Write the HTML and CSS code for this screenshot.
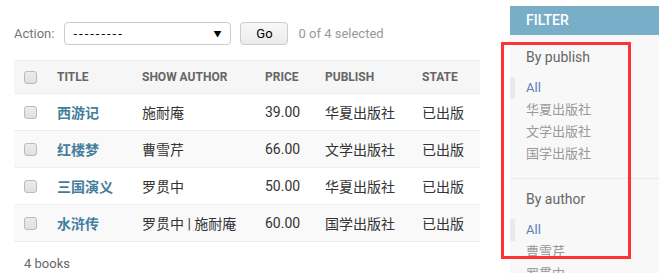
FILE: index.html
```html
<!DOCTYPE html>
<html lang="zh-CN">
<head>
  <meta charset="UTF-8">
  <title>Select book to change</title>
  <link rel="stylesheet" href="styles.css">
</head>
<body>

  <div class="changelist">
    <div class="actions">
      <label>Action:</label>
      <div class="select">
        <span>---------</span>
        <span class="arrow">&#9660;</span>
      </div>
      <button class="go">Go</button>
      <span class="counter">0 of 4 selected</span>
    </div>

    <table class="result-list">
      <colgroup>
        <col class="c-check">
        <col class="c-title">
        <col class="c-author">
        <col class="c-price">
        <col class="c-publish">
        <col class="c-state">
      </colgroup>
      <thead>
        <tr>
          <th><input type="checkbox"></th>
          <th>Title</th>
          <th>Show author</th>
          <th>Price</th>
          <th>Publish</th>
          <th>State</th>
        </tr>
      </thead>
      <tbody>
        <tr class="row1">
          <td><input type="checkbox"></td>
          <th><a href="#">西游记</a></th>
          <td>施耐庵</td>
          <td>39.00</td>
          <td>华夏出版社</td>
          <td>已出版</td>
        </tr>
        <tr class="row2">
          <td><input type="checkbox"></td>
          <th><a href="#">红楼梦</a></th>
          <td>曹雪芹</td>
          <td>66.00</td>
          <td>文学出版社</td>
          <td>已出版</td>
        </tr>
        <tr class="row1">
          <td><input type="checkbox"></td>
          <th><a href="#">三国演义</a></th>
          <td>罗贯中</td>
          <td>50.00</td>
          <td>华夏出版社</td>
          <td>已出版</td>
        </tr>
        <tr class="row2">
          <td><input type="checkbox"></td>
          <th><a href="#">水浒传</a></th>
          <td>罗贯中 | 施耐庵</td>
          <td>60.00</td>
          <td>国学出版社</td>
          <td>已出版</td>
        </tr>
      </tbody>
    </table>

    <p class="paginator">4 books</p>
  </div>

  <div class="filter">
    <h2>Filter</h2>
    <div class="filter-group">
      <h3>By publish</h3>
      <ul>
        <li class="selected"><a href="#">All</a></li>
        <li><a href="#">华夏出版社</a></li>
        <li><a href="#">文学出版社</a></li>
        <li><a href="#">国学出版社</a></li>
      </ul>
    </div>
    <div class="filter-group">
      <h3>By author</h3>
      <ul>
        <li class="selected"><a href="#">All</a></li>
        <li><a href="#">曹雪芹</a></li>
        <li><a href="#">罗贯中</a></li>
      </ul>
    </div>
  </div>

  <!-- annotation box -->
  <div class="highlight"></div>

</body>
</html>
```

FILE: styles.css
```css
html, body {
  overflow: hidden;
}

body {
  font-family: Roboto, "Noto Sans CJK SC", sans-serif;
  color: #333;
  margin: 0;
  padding: 0;
  display: flex;
  align-items: flex-start;
  position: relative;
  height: 273px;
}

a {
  color: #447e9b;
  text-decoration: none;
}

.changelist {
  width: 466px;
  margin-left: 14px;
  flex-shrink: 0;
}

.actions {
  display: flex;
  align-items: center;
  height: 24px;
  margin-top: 21px;
  font-size: 13px;
}

.actions label {
  color: #777;
  margin-right: 10px;
}

.select {
  width: 167px;
  height: 23px;
  border: 1px solid #ccc;
  border-radius: 4px;
  background: white;
  display: flex;
  align-items: center;
  justify-content: space-between;
  padding: 0 9px 0 8px;
  box-sizing: border-box;
  color: #000;
  font-size: 13px;
  letter-spacing: 2px;
}

.select .arrow {
  font-size: 8px;
  letter-spacing: 0;
}

.go {
  margin-left: 9px;
  width: 48px;
  height: 23px;
  border: 1px solid #ccc;
  border-radius: 4px;
  background: linear-gradient(#f7f7f7, #ececec);
  font-family: Roboto, sans-serif;
  font-size: 13px;
  color: #000;
  padding: 0;
}

.counter {
  margin-left: 10px;
  color: #999;
}

.result-list {
  width: 466px;
  margin-top: 15px;
  border-collapse: collapse;
  table-layout: fixed;
}

.c-check { width: 33px; }
.c-title { width: 85px; }
.c-author { width: 123px; }
.c-price { width: 60px; }
.c-publish { width: 97px; }
.c-state { width: 68px; }

.result-list th,
.result-list td {
  padding: 0 0 0 10px;
  text-align: left;
  vertical-align: middle;
  white-space: nowrap;
}

.result-list thead th {
  height: 32px;
  background-color: #f6f6f6;
  border-top: 1px solid #eee;
  border-bottom: 1px solid #eee;
  color: #666;
  font-size: 12px;
  font-weight: 700;
  text-transform: uppercase;
}

.result-list tbody td,
.result-list tbody th {
  height: 36px;
  border-bottom: 1px solid #eee;
  font-size: 14px;
  font-weight: 400;
}

.result-list tbody th a {
  font-weight: 700;
}

.row2 {
  background-color: #f9f9f9;
}

input[type="checkbox"] {
  appearance: none;
  margin: 0;
  width: 13px;
  height: 13px;
  display: block;
  border: 1px solid #bbb;
  border-radius: 3px;
  background: linear-gradient(#ececec, #e0e0e0);
}

.paginator {
  margin: 14px 0 0 10px;
  font-size: 13px;
  color: #666;
}

.filter {
  width: 240px;
  flex-shrink: 0;
  margin-left: 30px;
  margin-top: 6px;
  background-color: #f8f8f8;
  height: 300px;
}

.filter h2 {
  margin: 0;
  height: 29px;
  line-height: 29px;
  padding: 0 16px;
  background-color: #79aec8;
  color: white;
  font-size: 14px;
  font-weight: 500;
  text-transform: uppercase;
}

.filter-group {
  border-bottom: 1px solid #eaeaea;
}

.filter h3 {
  margin: 12px 16px 10px;
  line-height: 20px;
  font-size: 14px;
  font-weight: 400;
  color: #666;
}

.filter-group + .filter-group h3 {
  margin-top: 10px;
}

.filter ul {
  list-style: none;
  margin: 0 0 13px;
  padding: 0;
}

.filter li {
  line-height: 22px;
  padding-left: 16px;
  font-size: 13px;
}

.filter li a {
  color: #999;
}

.filter li.selected {
  border-left: 5px solid #eaeaea;
  padding-left: 11px;
}

.filter li.selected a {
  color: #5b80b2;
}

.highlight {
  position: absolute;
  left: 501px;
  top: 42px;
  width: 130px;
  height: 217px;
  border: 3px solid #f33;
  box-sizing: border-box;
}
```
